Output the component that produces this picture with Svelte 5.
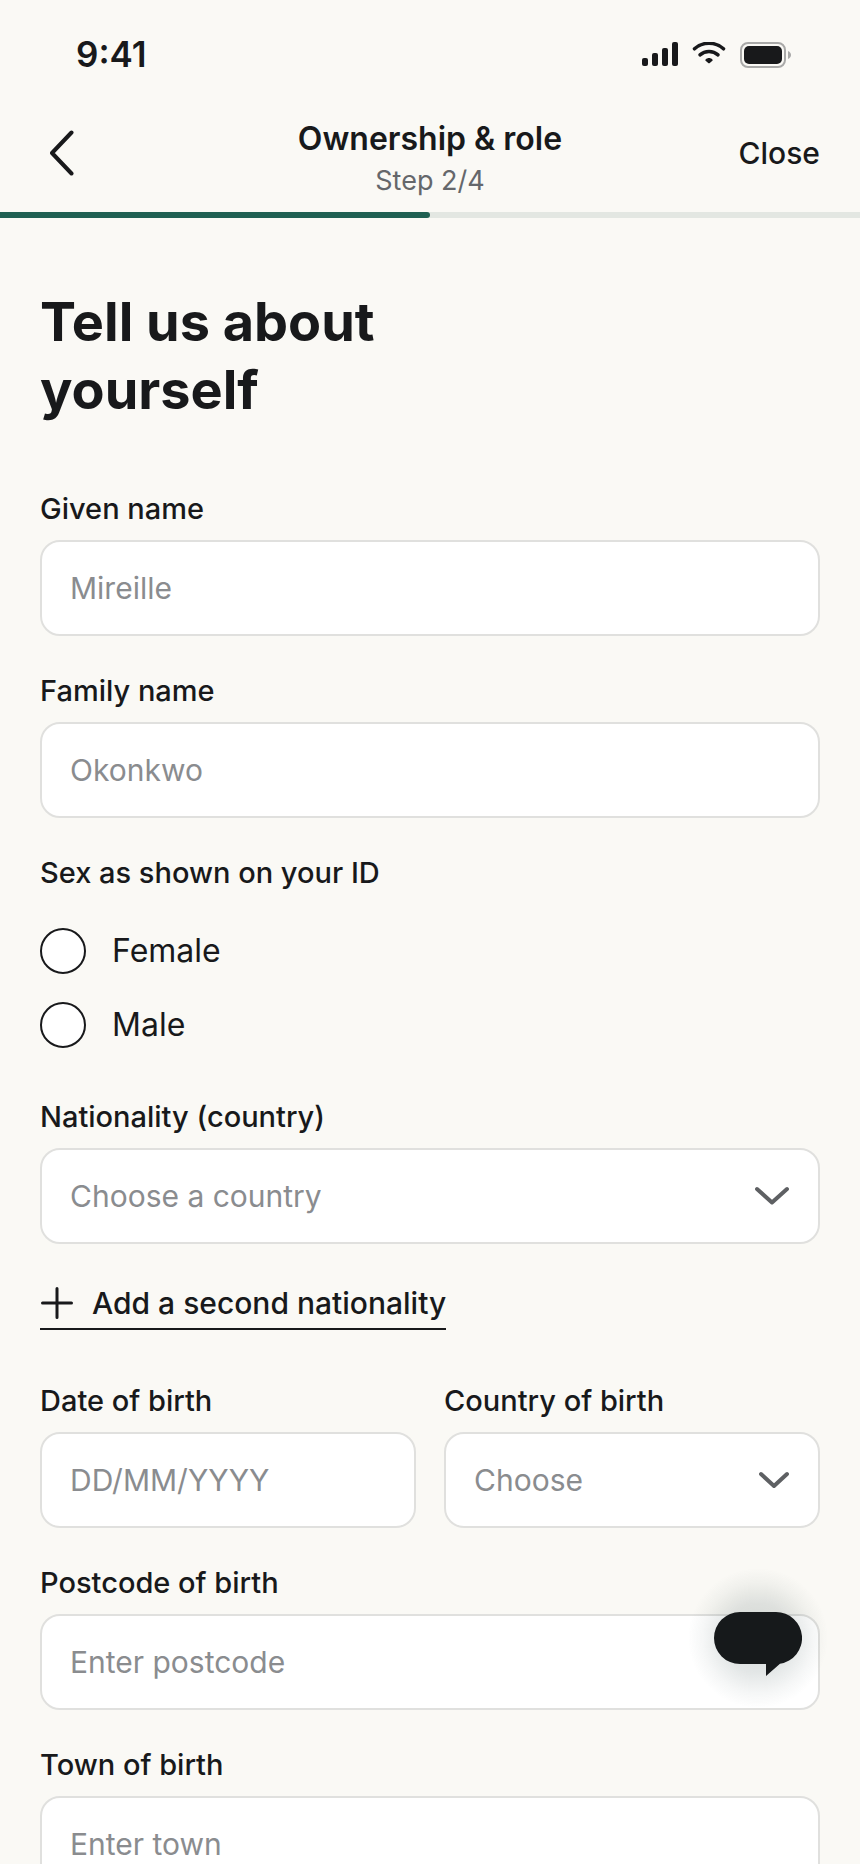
<script lang="ts">
	interface Country {
		code: string;
		name: string;
	}

	const countries: Country[] = [
		{ code: 'FR', name: 'France' },
		{ code: 'NG', name: 'Nigeria' },
		{ code: 'GB', name: 'United Kingdom' }
	];

	const sexOptions = ['Female', 'Male'];

	const step = 2;
	const totalSteps = 4;

	let givenName = $state('');
	let familyName = $state('');
	let sex = $state('');
	let nationality = $state('');
	let birthDate = $state('');
	let birthCountry = $state('');
	let postcode = $state('');
	let town = $state('');

	let progress = $derived((step / totalSteps) * 100);
</script>

<div class="screen">
	<div class="status-bar">
		<span class="time">9:41</span>
		<div class="status-icons">
			<svg width="36" height="26" viewBox="0 0 36 26" aria-hidden="true">
				<rect x="0" y="16" width="6" height="8" rx="2" />
				<rect x="10" y="11" width="6" height="13" rx="2" />
				<rect x="20" y="6" width="6" height="18" rx="2" />
				<rect x="30" y="0" width="6" height="24" rx="2" />
			</svg>
			<svg width="34" height="26" viewBox="0 0 34 26" aria-hidden="true">
				<path class="wave" d="M2.5 6.8C10.5 -.6 23.5 -.6 31.5 6.8" />
				<path class="wave" d="M8 12.900c5-4.600 13-4.600 18 0" />
				<path d="M13.600 17.400c1.800-2 5-2 6.800 0 .4.500.4 1 0 1.400l-2.600 2.200c-.5.400-1.100.4-1.600 0l-2.600-2.200c-.4-.4-.4-.9 0-1.400z" />
			</svg>
			<svg width="52" height="26" viewBox="0 0 52 26" aria-hidden="true">
				<rect class="shell" x="1" y="1" width="44" height="24" rx="7" />
				<rect x="4" y="4" width="38" height="18" rx="5" />
				<path class="cap" d="M48 9c4 1.500 4 6.500 0 8z" />
			</svg>
		</div>
	</div>

	<header>
		<button class="back" aria-label="Back">
			<svg width="24" height="46" viewBox="0 0 24 46" aria-hidden="true">
				<path d="M21.500 2.500L2 23l19.500 20.500" />
			</svg>
		</button>
		<div class="heading">
			<h2>Ownership &amp; role</h2>
			<p>Step {step}/{totalSteps}</p>
		</div>
		<button class="close">Close</button>
	</header>

	<div class="progress">
		<div class="progress-fill" style="width: {progress}%"></div>
	</div>

	<main>
		<h1>Tell us about<br />yourself</h1>

		<form>
			<div class="field">
				<label for="given-name">Given name</label>
				<input id="given-name" type="text" placeholder="Mireille" bind:value={givenName} />
			</div>

			<div class="field">
				<label for="family-name">Family name</label>
				<input id="family-name" type="text" placeholder="Okonkwo" bind:value={familyName} />
			</div>

			<fieldset>
				<legend>Sex as shown on your ID</legend>
				{#each sexOptions as option}
					<label class="radio">
						<input type="radio" name="sex" value={option} bind:group={sex} />
						<span>{option}</span>
					</label>
				{/each}
			</fieldset>

			<div class="field">
				<label for="nationality">Nationality (country)</label>
				<div class="select">
					<select id="nationality" class:empty={!nationality} bind:value={nationality}>
						<option value="">Choose a country</option>
						{#each countries as country}
							<option value={country.code}>{country.name}</option>
						{/each}
					</select>
					<svg width="34" height="20" viewBox="0 0 34 20" aria-hidden="true">
						<path d="M2 3l15 13.500L32 3" />
					</svg>
				</div>
			</div>

			<button type="button" class="add">
				<svg width="34" height="34" viewBox="0 0 34 34" aria-hidden="true">
					<path d="M17 2.500v29M2.500 17h29" />
				</svg>
				Add a second nationality
			</button>

			<div class="row">
				<div class="field">
					<label for="birth-date">Date of birth</label>
					<input id="birth-date" type="text" placeholder="DD/MM/YYYY" bind:value={birthDate} />
				</div>
				<div class="field">
					<label for="birth-country">Country of birth</label>
					<div class="select">
						<select id="birth-country" class:empty={!birthCountry} bind:value={birthCountry}>
							<option value="">Choose</option>
							{#each countries as country}
								<option value={country.code}>{country.name}</option>
							{/each}
						</select>
						<svg width="30" height="18" viewBox="0 0 30 18" aria-hidden="true">
							<path d="M2 3l13 12L28 3" />
						</svg>
					</div>
				</div>
			</div>

			<div class="field">
				<label for="postcode">Postcode of birth</label>
				<input id="postcode" type="text" placeholder="Enter postcode" bind:value={postcode} />
			</div>

			<div class="field">
				<label for="town">Town of birth</label>
				<input id="town" type="text" placeholder="Enter town" bind:value={town} />
			</div>
		</form>
	</main>

	<button class="chat" aria-label="Open chat">
		<svg width="88" height="76" viewBox="0 -12 88 76" aria-hidden="true">
			<path d="M26 0h36a26 26 0 0 1 4 51.700L52 64V52H26a26 26 0 0 1 0-52z" />
		</svg>
	</button>
</div>

<style>
	:global(body) {
		background: #faf9f5;
	}

	.screen {
		display: flex;
		flex-direction: column;
		height: 100vh;
		background: #faf9f5;
		color: #18191b;
		font-family: Inter, 'Liberation Sans', sans-serif;
	}

	button {
		padding: 0;
		border: none;
		background: none;
		color: inherit;
		font-family: inherit;
		cursor: pointer;
	}

	svg {
		display: block;
		flex-shrink: 0;
	}

	.status-bar {
		display: flex;
		align-items: center;
		justify-content: space-between;
		flex-shrink: 0;
		height: 110px;
		padding: 0 68px 0 76px;
	}

	.time {
		padding-bottom: 2px;
		font-size: 35px;
		font-weight: 600;
	}

	.status-icons {
		display: flex;
		gap: 14px;
		fill: #18191b;
	}

	.wave {
		fill: none;
		stroke: #18191b;
		stroke-width: 3.5;
		stroke-linecap: round;
	}

	.shell {
		fill: none;
		stroke: #a9a9a8;
		stroke-width: 2;
	}

	.cap {
		fill: #a9a9a8;
	}

	header {
		display: grid;
		grid-template-columns: 1fr auto 1fr;
		align-items: center;
		flex-shrink: 0;
		height: 94px;
		padding: 0 40px 8px;
	}

	header button {
		padding-bottom: 8px;
	}

	.back {
		justify-self: start;
		margin: 0 10px;
	}

	.back path,
	.add path {
		fill: none;
		stroke: #18191b;
		stroke-width: 4;
		stroke-linecap: round;
		stroke-linejoin: round;
	}

	.heading {
		padding: 7px 0 3px;
		text-align: center;
	}

	h2 {
		margin: 0;
		font-size: 32px;
		font-weight: 600;
		line-height: 44px;
	}

	.heading p {
		margin: 0;
		color: #65676b;
		font-size: 27px;
		line-height: 40px;
	}

	.close {
		justify-self: end;
		font-size: 30px;
		font-weight: 500;
	}

	.progress {
		flex-shrink: 0;
		height: 6px;
		background: #e3e7e2;
	}

	.progress-fill {
		height: 100%;
		border-radius: 0 3px 3px 0;
		background: #1f6052;
	}

	main {
		flex: 1;
		min-height: 0;
		padding: 70px 40px 0;
		overflow-y: auto;
		scrollbar-width: none;
	}

	h1 {
		margin: 0 0 66px;
		font-size: 54px;
		font-weight: 700;
		line-height: 68px;
	}

	form {
		display: flex;
		flex-direction: column;
		gap: 36px;
		padding-bottom: 40px;
	}

	.field {
		display: flex;
		flex-direction: column;
		gap: 12px;
		min-width: 0;
	}

	.field label,
	legend {
		padding: 0;
		font-size: 29px;
		font-weight: 500;
		line-height: 38px;
	}

	input[type='text'],
	select {
		box-sizing: border-box;
		width: 100%;
		height: 96px;
		margin: 0;
		padding: 0 28px;
		border: 2px solid #e0e0de;
		border-radius: 20px;
		background: #fff;
		color: #18191b;
		font-family: inherit;
		font-size: 30px;
	}

	input::placeholder {
		color: #8a8c8f;
		opacity: 1;
	}

	.select {
		display: grid;
		align-items: center;
	}

	.select > * {
		grid-area: 1 / 1;
	}

	.select svg {
		justify-self: end;
		margin-right: 31px;
		pointer-events: none;
	}

	.select path {
		fill: none;
		stroke: #5e6063;
		stroke-width: 4;
		stroke-linecap: round;
		stroke-linejoin: round;
	}

	select {
		appearance: none;
	}

	select.empty {
		color: #8a8c8f;
	}

	fieldset {
		display: flex;
		flex-direction: column;
		gap: 28px;
		min-width: 0;
		margin: 0 0 14px;
		padding: 0;
		border: none;
	}

	legend {
		margin-bottom: 36px;
	}

	.radio {
		display: flex;
		align-items: center;
		gap: 26px;
		font-size: 32px;
		line-height: 46px;
	}

	.radio input {
		appearance: none;
		width: 46px;
		height: 46px;
		margin: 0;
		border: 2px solid #18191b;
		border-radius: 50%;
		background: #fff;
	}

	.radio input:checked {
		border-width: 14px;
	}

	.add {
		display: flex;
		align-items: center;
		align-self: flex-start;
		gap: 18px;
		margin-bottom: 16px;
		padding: 2px 0 4px;
		border-bottom: 2px solid #18191b;
		font-size: 30px;
		font-weight: 500;
		line-height: 42px;
	}

	.add path {
		stroke-width: 3;
	}

	.row {
		display: grid;
		grid-template-columns: 1fr 1fr;
		gap: 28px;
	}

	/* floats above the form while it scrolls */
	.chat {
		position: fixed;
		right: 32px;
		bottom: 156px;
		display: grid;
		place-items: center;
		width: 140px;
		height: 140px;
		border-radius: 50%;
		background: radial-gradient(closest-side, rgba(24, 52, 52, 0.18), rgba(24, 52, 52, 0.12) 50%, rgba(24, 52, 52, 0.04) 80%, transparent);
	}

	.chat path {
		fill: #16191b;
	}
</style>
